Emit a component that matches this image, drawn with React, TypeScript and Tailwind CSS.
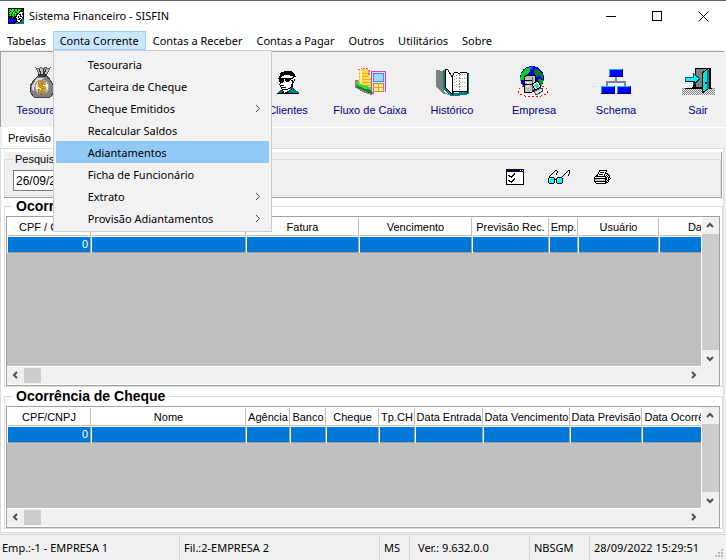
import { useState } from "react";
import type { ReactNode } from "react";

const menuItems = [
	"Tabelas",
	"Conta Corrente",
	"Contas a Receber",
	"Contas a Pagar",
	"Outros",
	"Utilitários",
	"Sobre",
];

const contaCorrenteItems = [
	{ label: "Tesouraria", sub: false },
	{ label: "Carteira de Cheque", sub: false },
	{ label: "Cheque Emitidos", sub: true },
	{ label: "Recalcular Saldos", sub: false },
	{ label: "Adiantamentos", sub: false },
	{ label: "Ficha de Funcionário", sub: false },
	{ label: "Extrato", sub: true },
	{ label: "Provisão Adiantamentos", sub: true },
];

const previsaoColumns = [
	{ label: "CPF / CNPJ", width: "w-[83px]" },
	{ label: "", width: "w-[154px]" },
	{ label: "Fatura", width: "w-[112px]" },
	{ label: "Vencimento", width: "w-[112px]" },
	{ label: "Previsão Rec.", width: "w-[76px]" },
	{ label: "Emp.", width: "w-[28px]" },
	{ label: "Usuário", width: "w-[80px]" },
	{ label: "Data", width: "w-[80px]" },
];

const chequeColumns = [
	{ label: "CPF/CNPJ", width: "w-[83px]" },
	{ label: "Nome", width: "w-[154px]" },
	{ label: "Agência", width: "w-[43px]" },
	{ label: "Banco", width: "w-[35px]" },
	{ label: "Cheque", width: "w-[52px]" },
	{ label: "Tp.CH", width: "w-[35px]" },
	{ label: "Data Entrada", width: "w-[67px]" },
	{ label: "Data Vencimento", width: "w-[86px]" },
	{ label: "Data Previsão", width: "w-[71px]" },
	{ label: "Data Ocorrência", width: "w-[84px]" },
];

const statusCells = [
	{ text: "Emp.:-1 - EMPRESA 1", box: "w-[180px] pl-0.5 border-r" },
	{ text: "Fil.:2-EMPRESA 2", box: "flex-1 pl-1 border-r" },
	{ text: "MS", box: "w-[30px] pl-1 border-r" },
	{ text: "Ver.: 9.632.0.0", box: "w-[120px] pl-2 border-r" },
	{ text: "NBSGM", box: "w-[60px] pl-1 border-r" },
	{ text: "28/09/2022 15:29:51", box: "w-[136px] pl-1" },
];

const palette: { [key: string]: string } = {
	"#": "#000000",
	w: "#ffffff",
	n: "#000080",
	b: "#0000ff",
	c: "#00ffff",
	t: "#008080",
	g: "#808080",
	s: "#c0c0c0",
	G: "#00ff00",
	y: "#ffff00",
};

// One character is one pixel, "." is transparent
function PixelIcon({ rows }: { rows: string[] }) {
	return (
		<svg
			width={rows[0].length}
			height={rows.length}
			shapeRendering="crispEdges"
			aria-hidden="true"
		>
			{rows.flatMap((row, y) =>
				row
					.split("")
					.map((c, x) =>
						palette[c] ? (
							<rect key={`${x}-${y}`} x={x} y={y} width="1" height="1" fill={palette[c]} />
						) : null
					)
			)}
		</svg>
	);
}

const appRows = [
	"################",
	"#GG#GG#GG#GGG###",
	"##GGGG#GG#GG####",
	"#G#GG#G#GGG#####",
	"##GG#GG##GG#sww#",
	"#GGG#GGGG##www##",
	"##G#GG#G##w##w##",
	"#GG#GG#G#www#ws#",
	"#####G###w#s##w#",
	"##b#G###ww#www##",
	"#nbb##n##ww##wt#",
	"#bnbb#bb#s##w#tt",
	"bbbnbbbb#www##tt",
	"bnbbbnb###ws#ttt",
	"#nbbbb##tt##tttt",
	"##nb###ttttttttt",
];

const clienteRows = [
	".......########.......",
	"....############......",
	"...##############.....",
	"...###############....",
	"...####wwwwww#####....",
	"..###wwwwwwwwwww###...",
	"..##wwwwwwwwwww##.....",
	".###############w.....",
	"..#####w######www#....",
	"..#####w#####w##w#....",
	"..#####ww###www##.....",
	"...###wwwwwwwww##.....",
	"...#wwwwwwwwwww#......",
	"..#wwwwwwwwwww##......",
	"...####wwwwwww##......",
	"...#wwwwwwwwww##......",
	"....#####wwww##t......",
	"....#wwwwww##t#tt.....",
	".....######wwt#ttt....",
	"...t##wwwwww#tttttt...",
	"..tttt#www##ttttttttt.",
	".tttt##w###ttttttttttt",
	"######################",
];

const checklistRows = [
	"##################",
	"#nnnnnnnnnnnn#w#w#",
	"##################",
	"#wwwwwwwwwwwwwwww#",
	"#wwwwwww#wwwwwwww#",
	"#wwwwww##wwwwwwww#",
	"#w##ww##wwwwwwwww#",
	"#ww####wwwwwwwwww#",
	"#wwww#wwwwwwwwwww#",
	"#wwwwwww#wwwwwwww#",
	"#wwwwww##wwwwwwww#",
	"#w##ww##wwwwwwwww#",
	"#ww####wwwwwwwwww#",
	"#wwww#wwwwwwwwwww#",
	"#wwwwwwwwwwwwwwww#",
	"##################",
];

const glassesRows = [
	".......##...........##",
	"......#..#.........#.#",
	".....#...#........#..#",
	"....#...#........#...#",
	"...#....#.......#...#.",
	"..#............#....#.",
	".#............#.......",
	".#####...#####........",
	"#cwccc#.#cwccc#.......",
	"#wcccc###wcccc#.......",
	"#ccccc#.#ccccc#.......",
	"#ccccc#.#ccccc#.......",
	"#ccccc#.#ccccc#.......",
	".#####...#####........",
];

const printerRows = [
	".....########....",
	".....#wwwwww#....",
	"....#w####w#.....",
	"....#wwwwww###...",
	"...#w####w#ww##..",
	"..##wwwwww#w#w##.",
	".###########w#w#.",
	"#wwwwwwwwww##w##.",
	"#############w#w#",
	"#sssssyyyss##w##.",
	"#ssssssssss#w##..",
	"#############w#..",
	".#wwwwwwwww###...",
	"..##########.....",
];

function MoneyBagIcon() {
	return (
		<svg width="26" height="32" viewBox="0 0 26 32" shapeRendering="crispEdges" aria-hidden="true">
			<ellipse cx="14" cy="30" rx="11" ry="2" fill="#c0c0c0" />
			<path d="M7 2l3 1 2-2 2 2 3-2 1 2 3-1-4 8h-6z" fill="#c0c0c0" stroke="#606060" />
			<path d="M10 3l2 5m2-5v5m3-5l-2 5" stroke="#303030" />
			<path d="M9 10h9l3 4 4 6v6l-4 5H5l-4-5v-6l4-6z" fill="#808080" stroke="#404040" />
			<path d="M8 12h8l-5 3-6 6v5l-2-2v-4z" fill="#d8d8d8" />
			<circle cx="13" cy="21" r="7" fill="#f0f0e0" stroke="#a0a0a0" />
			<path d="M9 9h9" stroke="#303030" strokeWidth="2" />
			<text
				x="13"
				y="27"
				textAnchor="middle"
				fontFamily="Liberation Sans, sans-serif"
				fontWeight="bold"
				fontSize="16"
				fill="#f0b000"
				stroke="#805000"
				strokeWidth="0.5"
			>
				$
			</text>
		</svg>
	);
}

function CoinsIcon() {
	return (
		<svg width="32" height="28" viewBox="0 0 32 28" shapeRendering="crispEdges" aria-hidden="true">
			<path d="M1 13l4-1h8l8 4v7l-3 4-6-2-11-6z" fill="#38c038" stroke="#e040e0" strokeDasharray="2 1" />
			<path d="M2 13l4-1 12 8v3l-7-2-9-5z" fill="#48d048" />
			<path d="M2 17l9 4 7 1v4l-7-3-9-4z" fill="#108818" />
			<path d="M5 2l3-1h4l3 1v13l-4 2-6-1z" fill="#ffd840" />
			<path d="M5 5h10M5 8h10M5 11h10M5 14h10" stroke="#e8b020" />
			<path d="M7 2v14" stroke="#fff4a0" strokeWidth="2" />
			<path d="M14 2v14" stroke="#e0a020" />
			<path d="M12 9l3-1 3 1v9l-3 1-3-1z" fill="#ffe050" />
			<path d="M12 11h5m-5 3h5m-5 3h5" stroke="#e8b020" />
			<path d="M4 2l3-2h6l2 2v5" fill="none" stroke="#e040e0" strokeDasharray="2 1" />
			<rect x="17" y="3" width="14" height="21" fill="#d0e4f8" />
			<path d="M17 24V3h14v21" fill="none" stroke="#c040e0" />
			<rect x="19" y="5" width="10" height="8" fill="#a8d4ff" stroke="#4888d8" />
			<rect x="19" y="15" width="10" height="8" fill="#ffe890" stroke="#c08830" />
			<path d="M19 19h10M24 15v8" stroke="#d8a040" />
		</svg>
	);
}

function BookIcon() {
	return (
		<svg width="33" height="28" viewBox="0 0 33 28" shapeRendering="crispEdges" aria-hidden="true">
			<path d="M0 2l8 1v21l6 3-6-1-8-7z" fill="#808080" />
			<path d="M8 2v17l8 8 15-2V5" fill="none" stroke="#008080" strokeWidth="3" />
			<path d="M9 1l3 1 4 7v17l-7-7z" fill="#fff" stroke="#000" />
			<path d="M16 9l2-4 3-1 2 2 2-2h4l2 1v19l-6-1-4 1-3-1-2 3z" fill="#fff" stroke="#000" />
			<path d="M23 6v16" stroke="#808080" strokeDasharray="2 1" />
			<path
				d="M18 9l4-2m-4 5l4-2m-4 5l4-2m-4 5l4-2m2-10l5 1m-5 3l5 1m-5 3l5 1m-5 3l5 1"
				stroke="#a0a0a0"
				strokeDasharray="1 1"
			/>
		</svg>
	);
}

function CompanyIcon() {
	return (
		<svg width="32" height="32" viewBox="0 0 32 32" shapeRendering="crispEdges" aria-hidden="true">
			<circle cx="14" cy="12" r="12" fill="#0000e0" />
			<path d="M3 7l5-5 5-1-1 4-3 3-2 5-5 2z" fill="#00d020" />
			<path d="M17 2l5 3 3 4v4l-4-3-3 1-2-5z" fill="#008020" />
			<path d="M20 13l6 1-3 7-3 1z" fill="#00a020" />
			<path d="M11 1l4 0-2 3z" fill="#0080ff" />
			<ellipse cx="15" cy="25" rx="15" ry="6" fill="none" stroke="#f00000" strokeDasharray="2 2" />
			<path d="M6 11l3-2h8v15l-3 2H6z" fill="#c0c0c0" stroke="#000" />
			<path d="M14 11v14" stroke="#606060" />
			<path d="M7 14h7m-7 4h7" stroke="#000" />
			<path d="M8 16h3m-3 4h3" stroke="#fff" />
			<path d="M14 18l6-3 3 6-6 3z" fill="#e0e0d0" stroke="#000" />
			<path d="M16 19l3-2 2 4-3 1z" fill="#20e0c0" />
			<path d="M16 25l8-3 1 3-7 4z" fill="#d8d8d8" stroke="#404040" />
		</svg>
	);
}

function SchemaIcon() {
	return (
		<svg width="30" height="26" viewBox="0 0 30 26" shapeRendering="crispEdges" aria-hidden="true">
			<path d="M15 8v5M6 18v-5h18v5" fill="none" stroke="#8080a0" strokeWidth="2" />
			{[
				[8, 0],
				[0, 17],
				[16, 17],
			].map(([x, y]) => (
				<g key={`${x}-${y}`}>
					<rect x={x} y={y} width="14" height="8" fill="#000080" />
					<rect x={x} y={y} width="13" height="7" fill="#00c0ff" />
					<rect x={x + 1} y={y + 1} width="12" height="6" fill="#0000ff" />
				</g>
			))}
		</svg>
	);
}

function ExitIcon() {
	return (
		<svg width="33" height="28" viewBox="0 0 33 28" shapeRendering="crispEdges" aria-hidden="true">
			<defs>
				<pattern id="floor" width="2" height="2" patternUnits="userSpaceOnUse">
					<rect width="1" height="1" fill="#808080" />
					<rect x="1" y="1" width="1" height="1" fill="#808080" />
				</pattern>
			</defs>
			<rect x="0" y="20" width="33" height="7" fill="url(#floor)" />
			<path d="M3 20h27" stroke="#000" />
			<path d="M13 0h16v20H13z" fill="#000" />
			<path d="M14 1h13v18H14z" fill="#808080" />
			<path d="M10 20l3-5v5z" fill="#000" />
			<path d="M20 5l7-5v20l-7 5z" fill="#00e0e0" stroke="#000" />
			<path d="M26 2v19" stroke="#008080" strokeWidth="2" />
			<rect x="23" y="14" width="2" height="2" fill="#000" />
			<path d="M3 9h8V5l7 6-7 6v-4H3z" fill="#00ffff" stroke="#006060" />
			<path d="M4 13h8v3l5-5" fill="none" stroke="#000" />
		</svg>
	);
}

const tools: { label: string; icon: ReactNode; place: string }[] = [
	{ label: "Tesouraria", icon: <MoneyBagIcon />, place: "col-start-1" },
	{ label: "Clientes", icon: <PixelIcon rows={clienteRows} />, place: "col-start-4" },
	{ label: "Fluxo de Caixa", icon: <CoinsIcon />, place: "col-start-5" },
	{ label: "Histórico", icon: <BookIcon />, place: "col-start-6" },
	{ label: "Empresa", icon: <CompanyIcon />, place: "col-start-7" },
	{ label: "Schema", icon: <SchemaIcon />, place: "col-start-8" },
	{ label: "Sair", icon: <ExitIcon />, place: "col-start-9" },
];

const arrowPaths = {
	up: "M1 6l3-3 3 3",
	down: "M1 3l3 3 3-3",
	left: "M6 1L3 4l3 3",
	right: "M3 1l3 3-3 3",
};

function ArrowButton({ dir }: { dir: keyof typeof arrowPaths }) {
	return (
		<button
			aria-label={dir}
			className="flex h-[17px] w-[17px] shrink-0 items-center justify-center bg-[#f0f0f0]"
		>
			<svg width="9" height="9" viewBox="0 0 9 9" aria-hidden="true">
				<path d={arrowPaths[dir]} fill="none" stroke="#505050" strokeWidth="2" />
			</svg>
		</button>
	);
}

function DataGrid({
	columns,
	name,
}: {
	columns: { label: string; width: string }[];
	name: string;
}) {
	return (
		<div className="flex flex-1 flex-col border border-[#a0a0a8] bg-[#f0f0f0]">
			<div className="flex flex-1">
				<div className="min-w-0 flex-1 overflow-hidden border-r border-b border-white bg-[#c0c0c0]">
					<div className="h-9 overflow-hidden bg-white">
						<table
							aria-label={name}
							className="w-0 table-fixed border-separate border-spacing-px text-[11px] leading-4 whitespace-nowrap"
						>
							<colgroup>
								{columns.map((col, i) => (
									<col key={i} className={col.width} />
								))}
							</colgroup>
							<thead>
								<tr className="h-[18px]">
									{columns.map((col, i) => (
										<th
											key={i}
											className="border-r border-b border-[#c0c0c0] p-0 text-center font-normal"
										>
											{col.label}
										</th>
									))}
								</tr>
							</thead>
							<tbody>
								<tr className="h-4">
									{columns.map((_, i) => (
										<td
											key={i}
											className="h-4 border-r border-b border-[#a0a0a0] bg-[#0078d7] p-0 pr-0.5 text-right leading-[15px] text-white"
										>
											{i === 0 ? "0" : ""}
										</td>
									))}
								</tr>
							</tbody>
						</table>
					</div>
				</div>
				<div className="flex w-[17px] flex-col">
					<ArrowButton dir="up" />
					<div className="flex-1 bg-[#cdcdcd]" />
					<ArrowButton dir="down" />
				</div>
			</div>
			<div className="flex border-b border-white pr-[17px]">
				<ArrowButton dir="left" />
				<div className="my-px w-[17px] bg-[#cdcdcd]" />
				<div className="flex-1" />
				<ArrowButton dir="right" />
			</div>
		</div>
	);
}

export default function App() {
	const [openMenu, setOpenMenu] = useState("Conta Corrente");
	const [date, setDate] = useState("26/09/2022");

	return (
		<div className="flex min-h-screen flex-col overflow-hidden border-t border-[#666666] bg-[#f0f0f0] font-['Liberation_Sans',Arial,sans-serif] text-[11px] text-black">
			{/* Title bar */}
			<header className="flex h-[30px] items-center bg-white pl-2 font-['Noto_Sans','Segoe_UI',sans-serif]">
				<PixelIcon rows={appRows} />
				<h1 className="ml-[5px] flex-1">Sistema Financeiro - SISFIN</h1>
				<button aria-label="Minimizar" className="flex w-[46px] justify-center">
					<svg width="11" height="11" shapeRendering="crispEdges">
						<path d="M0 5h10v1H0z" />
					</svg>
				</button>
				<button aria-label="Maximizar" className="flex w-[46px] justify-center">
					<svg width="11" height="11" shapeRendering="crispEdges">
						<path d="M.5 .5h9v9h-9z" fill="none" stroke="#000" />
					</svg>
				</button>
				<button aria-label="Fechar" className="flex w-[46px] justify-center">
					<svg width="11" height="11">
						<path d="M.5 .5l10 10m0-10l-10 10" stroke="#000" />
					</svg>
				</button>
			</header>

			{/* Menu bar */}
			<nav className="flex h-[19px] bg-white font-['Noto_Sans','Segoe_UI',sans-serif] leading-[17px]">
				{menuItems.map((item) => (
					<div key={item} className="relative">
						<button
							onClick={() => setOpenMenu(openMenu === item ? "" : item)}
							className={`h-[19px] border px-1.5 ${
								openMenu === item
									? "border-[#99d1ff] bg-[#cce8ff]"
									: "border-transparent"
							}`}
						>
							{item}
						</button>
						{item === "Conta Corrente" && openMenu === item && (
							<ul className="absolute top-[19px] left-0 z-10 w-[219px] border border-[#cccccc] bg-[#f2f2f2] p-0.5">
								{contaCorrenteItems.map((entry) => (
									<li key={entry.label}>
										<button
											className={`flex h-[22px] w-full items-center justify-between pr-2 pl-8 whitespace-nowrap ${
												entry.label === "Adiantamentos"
													? "bg-[#91c9f7]"
													: "hover:bg-[#91c9f7]"
											}`}
										>
											{entry.label}
											{entry.sub && (
												<svg width="6" height="9" viewBox="0 0 6 9" aria-hidden="true">
													<path d="M1 1l3.5 3.5L1 8" fill="none" stroke="#404040" />
												</svg>
											)}
										</button>
									</li>
								))}
							</ul>
						)}
					</div>
				))}
			</nav>

			{/* Toolbar */}
			<div className="mt-px mr-0.5 grid h-[76px] grid-cols-[repeat(9,82px)] overflow-hidden border-t border-l border-[#a0a0a0]">
				{tools.map((tool) => (
					<button
						key={tool.label}
						className={`flex h-[66px] flex-col items-center justify-end text-[#000080] ${tool.place}`}
					>
						<span className="flex h-8 items-center">{tool.icon}</span>
						<span className="mt-1 leading-4">{tool.label}</span>
					</button>
				))}
			</div>

			{/* Tabs */}
			<div role="tablist" className="flex h-[21px] border-t border-white pl-0.5">
				<button
					role="tab"
					aria-selected="true"
					className="w-[110px] bg-white pl-1.5 text-left"
				>
					Previsão
				</button>
			</div>

			<main className="mr-0.5 flex flex-1 flex-col border border-[#dcdcdc] bg-white py-[3px] pl-[3px]">
				{/* Search panel */}
				<div className="mr-px h-[46px] border-r border-b border-[#a0a0a0] bg-[#f0f0f0]">
					<fieldset className="flex h-11 border border-[#dcdcdc] pl-2">
						<legend className="px-0.5 leading-[14px]">Pesquisa</legend>
						<input
							type="text"
							aria-label="Data"
							value={date}
							onChange={(e) => setDate(e.target.value)}
							className="mt-1 h-[21px] w-[88px] border border-[#7a7a7a] bg-white px-0.5 text-xs"
						/>
						<div className="ml-auto flex h-[22px] w-[214px] items-center gap-6">
							<button aria-label="Selecionar">
								<PixelIcon rows={checklistRows} />
							</button>
							<button aria-label="Visualizar">
								<PixelIcon rows={glassesRows} />
							</button>
							<button aria-label="Imprimir">
								<PixelIcon rows={printerRows} />
							</button>
						</div>
					</fieldset>
				</div>

				{/* Group boxes, the title sits on the top border */}
				<section className="mt-2 flex h-[181px] flex-col border border-[#dcdcdc] pr-0.5 pl-px">
					<h2 className="-mt-[9px] mb-0.5 ml-1.5 w-fit bg-white px-1 text-sm leading-4 font-bold">
						Ocorrência
					</h2>
					<DataGrid columns={previsaoColumns} name="Ocorrência" />
				</section>

				<section className="mt-[9px] flex flex-1 flex-col border border-[#dcdcdc] pr-0.5 pl-px">
					<h2 className="-mt-[9px] mb-0.5 ml-1.5 w-fit bg-white px-1 text-sm leading-4 font-bold">
						Ocorrência de Cheque
					</h2>
					<DataGrid columns={chequeColumns} name="Ocorrência de Cheque" />
				</section>
			</main>

			{/* Status bar */}
			<footer className="relative mt-px flex h-[26px] border-t border-[#d7d7d7] pt-px font-['Noto_Sans','Segoe_UI',sans-serif] leading-[23px] whitespace-nowrap">
				{statusCells.map((cell) => (
					<div key={cell.text} className={`shrink-0 border-[#d7d7d7] ${cell.box}`}>
						{cell.text}
					</div>
				))}
				<svg
					width="9"
					height="9"
					className="absolute right-0.5 bottom-0.5"
					fill="#b8b8b8"
					shapeRendering="crispEdges"
					aria-hidden="true"
				>
					<path d="M6 0h2v2H6zM3 3h2v2H3zM6 3h2v2H6zM0 6h2v2H0zM3 6h2v2H3zM6 6h2v2H6z" />
				</svg>
			</footer>
		</div>
	);
}
